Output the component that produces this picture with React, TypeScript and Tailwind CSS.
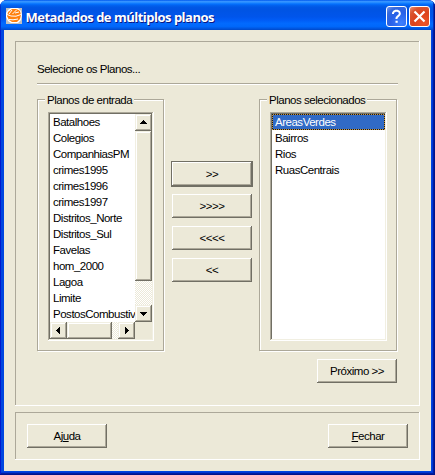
import type { ReactNode } from "react";

const inputLayers = [
  "Batalhoes",
  "Colegios",
  "CompanhiasPM",
  "crimes1995",
  "crimes1996",
  "crimes1997",
  "Distritos_Norte",
  "Distritos_Sul",
  "Favelas",
  "hom_2000",
  "Lagoa",
  "Limite",
  "PostosCombustiv",
];
const selectedLayers = ["AreasVerdes", "Bairros", "Rios", "RuasCentrais"];

const raised =
  "bg-[#ece9d8] shadow-[inset_-1px_-1px_#716f64,inset_1px_1px_#ffffff,inset_-2px_-2px_#aca899]";
const scrollRaised =
  "bg-[#ece9d8] shadow-[inset_-1px_-1px_#716f64,inset_1px_1px_#f1efe2,inset_-2px_-2px_#aca899,inset_2px_2px_#ffffff]";
const sunken =
  "bg-white p-[2px] shadow-[inset_-1px_-1px_#ffffff,inset_1px_1px_#aca899,inset_-2px_-2px_#f1efe2,inset_2px_2px_#716f64]";
const panel = "shadow-[inset_-1px_-1px_#ffffff,inset_1px_1px_#aca899]";
const track = "bg-[repeating-conic-gradient(#ffffff_0_25%,#ece9d8_0_50%)] bg-[length:2px_2px]";

function PushButton({ children, isDefault = false }: { children: ReactNode; isDefault?: boolean }) {
  const button = (
    <button className={`flex h-6 w-20 items-center justify-center leading-4 ${raised}`}>
      <span>{children}</span>
    </button>
  );
  return isDefault ? <div className="-m-px bg-[#716f64] p-px">{button}</div> : button;
}

function Group({ title, children, className }: { title: string; children: ReactNode; className: string }) {
  return (
    <section
      className={`h-[252px] border border-[#aca899] shadow-[1px_1px_#ffffff,inset_1px_1px_#ffffff] ${className}`}
    >
      <h2 className="-mt-2 ml-[7px] h-5 w-fit bg-[#ece9d8] px-[2px] leading-4">
        {title}
      </h2>
      {children}
    </section>
  );
}

function Arrow({ direction }: { direction: "up" | "down" | "left" | "right" }) {
  const paths = {
    up: "M8 6h1v1h1v1h1v1h1v1H5V9h1V8h1V7h1z",
    down: "M5 7h7v1h-1v1h-1v1H9v1H8v-1H7V9H6V8H5z",
    left: "M9 5h1v7H9v-1H8v-1H7V9H6V8h1V7h1V6h1z",
    right: "M7 5h1v1h1v1h1v1h1v1h-1v1H9v1H8v1H7z",
  };
  return (
    <div className={`size-[17px] shrink-0 ${scrollRaised}`}>
      <svg className="size-[17px]" viewBox="0 0 17 17" shapeRendering="crispEdges">
        <path d={paths[direction]} />
      </svg>
    </div>
  );
}

function GlobeIcon() {
  return (
    <svg className="h-4 w-4" viewBox="0 0 16 16">
      <path fill="#c0c0c0" d="M0 0h16v16H0z" />
      <path fill="#fff" d="M5 0h7l3 3 1 4-1 5-3 3H5l-3-2-2-4V5l2-3z" />
      <path fill="#ff800c" d="M6 1h5l3 2 1 4-1 4-3 3H6l-3-2-2-4 1-4z" />
      <path
        d="M1 6.5 5 8l5 .2 5-1.7M3 11.5l4 .3 5-.8M11 1.5 6.5 6M6 2 3 6M9 5l4-1"
        fill="none"
        stroke="#fff"
        strokeWidth="1"
      />
    </svg>
  );
}

export default function App() {
  return (
    <div className="h-[475px] w-[435px] overflow-hidden bg-white font-['Liberation_Sans',Arial,sans-serif] text-[11.5px] tracking-[-0.48px] text-black">
      <div className="flex h-full flex-col overflow-hidden rounded-t-[7px] bg-[#0046e0] shadow-[inset_-1px_-1px_#00138c,inset_1px_0_#0019cf,inset_-2px_-2px_#001ea0,inset_-3px_-3px_#0036d4]">
        <header className="flex h-[30px] shrink-0 items-start bg-[linear-gradient(180deg,#0058ee_0%,#3593ff_5%,#288eff_8%,#127dff_11%,#036ffc_14%,#0262ee_18%,#0057e5_24%,#0054e3_32%,#0055eb_56%,#005bf5_66%,#026afe_78%,#0068fb_88%,#0059e5_94%,#0048c8_100%)] pl-[6px] pr-[5px] shadow-[inset_-1px_0_#00138c,inset_-2px_0_#0030b8,inset_1px_0_#0030d0]">
          <div className="mt-2">
            <GlobeIcon />
          </div>
          <h1 className="ml-[3.5px] mt-2 flex-1 whitespace-nowrap font-['Open_Sans','Noto_Sans',sans-serif] text-[13px] font-bold leading-[18px] tracking-[-0.5px] text-white [text-shadow:1px_1px_#0a1883]">
            Metadados de múltiplos planos
          </h1>
          <div className="mt-[6px] flex gap-[2px]">
            <button className="size-[21px] rounded-[3px] border border-white bg-[radial-gradient(circle_at_75%_85%,#3c80ff_0%,#2860e8_50%,#3468dc_75%,#7898ec_100%)]">
              <svg viewBox="0 0 19 19" className="size-[19px]" fill="none" stroke="white" strokeWidth="2">
                <path d="M6 7V6l1-1.5 1.5-.7h2l1.7.9.6 1.5v.7l-.7 1.3L10.2 10l-.7 1v1M8.5 14.8h2.2" />
              </svg>
            </button>
            <button className="size-[21px] rounded-[3px] border border-white bg-[radial-gradient(circle_at_75%_85%,#ee5528_0%,#dc431d_50%,#d9542f_75%,#ee9278_100%)]">
              <svg viewBox="0 0 19 19" className="size-[19px]" fill="none" stroke="white" strokeWidth="2.2">
                <path d="m4.5 4.5 10 10m0-10-10 10" />
              </svg>
            </button>
          </div>
        </header>

        <main className="mx-1 mb-1 flex min-h-0 flex-1 flex-col gap-[6px] bg-[#ece9d8] px-[11px] pt-[11px]">
          <section className={`h-[365px] shrink-0 px-[22px] pt-5 ${panel}`}>
            <p className="h-[22px] leading-4">Selecione os Planos...</p>
            <div className="h-[2px] w-[361px] border-b border-t border-b-white border-t-[#aca899]" />
            <div className="mt-[14px] flex">
              <Group title="Planos de entrada" className="w-[127px]">
                <div className={`ml-[10px] h-[229px] w-[106px] ${sunken}`}>
                  <div className="flex h-[208px]">
                    <ul className="w-[85px] whitespace-nowrap pl-[3px]">
                      {inputLayers.map((name) => (
                        <li key={name} className="h-4 leading-4">
                          {name}
                        </li>
                      ))}
                    </ul>
                    <div className={`flex w-[17px] flex-col ${track}`}>
                      <Arrow direction="up" />
                      <div className={`mb-auto h-[150px] ${scrollRaised}`} />
                      <Arrow direction="down" />
                    </div>
                  </div>
                  <div className="flex h-[17px] bg-[#ece9d8]">
                    <div className={`flex w-[85px] ${track}`}>
                      <Arrow direction="left" />
                      <div className={`mr-auto w-[45px] ${scrollRaised}`} />
                      <Arrow direction="right" />
                    </div>
                  </div>
                </div>
              </Group>

              <div className="ml-2 mt-[63px] flex w-20 flex-col gap-2">
                <PushButton isDefault>&gt;&gt;</PushButton>
                <PushButton>&gt;&gt;&gt;&gt;</PushButton>
                <PushButton>&lt;&lt;&lt;&lt;</PushButton>
                <PushButton>&lt;&lt;</PushButton>
              </div>

              <Group title="Planos selecionados" className="ml-[7px] w-[138px]">
                <div className={`ml-[10px] h-[229px] w-[117px] ${sunken}`}>
                  <ul>
                    {selectedLayers.map((name, index) =>
                      index === 0 ? (
                        <li
                          key={name}
                          className="h-4 bg-[repeating-conic-gradient(#ce9639_0_25%,#101820_0_50%)] bg-[length:2px_2px] p-px"
                        >
                          <div className="h-[14px] bg-[#316ac5] pl-[2px] leading-[14px] text-white">{name}</div>
                        </li>
                      ) : (
                        <li key={name} className="h-4 pl-[3px] leading-4">
                          {name}
                        </li>
                      ),
                    )}
                  </ul>
                </div>
              </Group>
            </div>
            <div className="mt-2 flex w-[360px] justify-end">
              <PushButton>Próximo &gt;&gt;</PushButton>
            </div>
          </section>
          <footer className={`flex h-12 shrink-0 items-start justify-between px-3 pt-3 ${panel}`}>
            <PushButton>
              Aj<u>u</u>da
            </PushButton>
            <PushButton>
              <u>F</u>echar
            </PushButton>
          </footer>
        </main>
      </div>
    </div>
  );
}
